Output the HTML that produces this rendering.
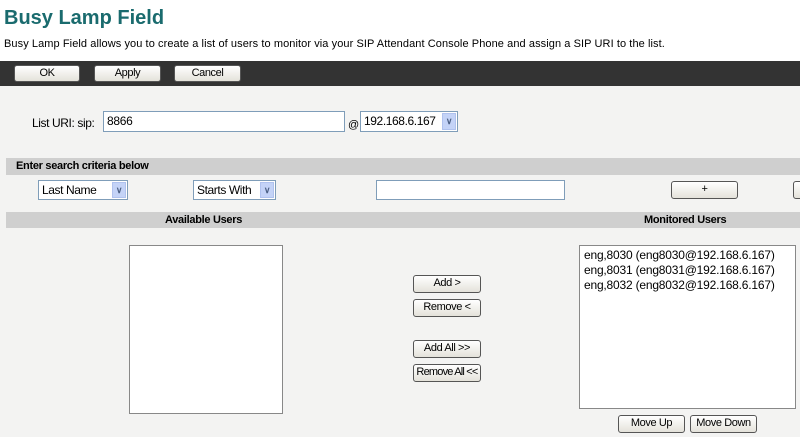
<!DOCTYPE html>
<html><head><style>
body{margin:0;width:800px;height:437px;overflow:hidden;background:#fff;font-family:"Liberation Sans",Arial,sans-serif;font-size:12px;color:#000;position:relative}
.a{position:absolute}
h1{position:absolute;left:4px;top:7px;margin:0;font-size:20px;color:#1a6b6e;font-weight:bold}
.btn{position:absolute;background:linear-gradient(#fff,#e4e2da);border:1px solid #555;border-radius:3px;font-size:11px;text-align:center;box-sizing:border-box;line-height:15px;white-space:nowrap;letter-spacing:-0.4px}
.inp{position:absolute;background:#fff;border:1px solid #7f9db9;box-sizing:border-box;font-size:12px;padding-left:3px;letter-spacing:-0.3px}
.sel{position:absolute;background:#fff;border:1px solid #7f9db9;box-sizing:border-box;font-size:12px;padding-left:3px;line-height:18px;letter-spacing:-0.4px;white-space:nowrap}
.arr{position:absolute;right:1px;top:1px;width:14px;bottom:1px;background:#c4d3f7;border:1px solid #b0c2ee;box-sizing:border-box;color:#4d6185;font-size:9px;text-align:center;line-height:15px;font-weight:bold}
.bar{position:absolute;left:6px;right:0;background:#cfcfcf;font-weight:bold;font-size:11px;letter-spacing:-0.3px}
</style></head><body>
<h1>Busy Lamp Field</h1>
<div class="a" style="left:4px;top:38px;font-size:11px;letter-spacing:0.08px;white-space:nowrap">Busy Lamp Field allows you to create a list of users to monitor via your SIP Attendant Console Phone and assign a SIP URI to the list.</div>
<div class="a" style="left:0;top:61px;width:800px;height:25px;background:#333"></div>
<div class="btn" style="left:14px;top:65px;width:66px;height:17px">OK</div>
<div class="btn" style="left:94px;top:65px;width:67px;height:17px">Apply</div>
<div class="btn" style="left:174px;top:65px;width:67px;height:17px">Cancel</div>
<div class="a" style="left:0;top:86px;width:800px;height:351px;background:#f3f3f2"></div>
<div class="a" style="left:32px;top:116px;letter-spacing:-0.4px">List URI: sip:</div>
<div class="inp" style="left:103px;top:111px;width:242px;height:21px;line-height:19px">8866</div>
<div class="a" style="left:348px;top:119px;font-size:11px">@</div>
<div class="sel" style="left:360px;top:111px;width:98px;height:21px">192.168.6.167<div class="arr">&#8744;</div></div>
<div class="bar" style="top:158px;height:17px;line-height:17px;padding-left:10px">Enter search criteria below</div>
<div class="sel" style="left:38px;top:180px;width:90px;height:20px">Last Name<div class="arr">&#8744;</div></div>
<div class="sel" style="left:193px;top:180px;width:83px;height:20px">Starts With<div class="arr">&#8744;</div></div>
<div class="inp" style="left:376px;top:180px;width:189px;height:20px"></div>
<div class="btn" style="left:671px;top:181px;width:67px;height:18px">+</div>
<div class="btn" style="left:793px;top:181px;width:20px;height:18px"></div>
<div class="bar" style="top:212px;height:16px;line-height:16px"><span class="a" style="left:159px">Available Users</span><span class="a" style="left:638px">Monitored Users</span></div>
<div class="a" style="left:129px;top:245px;width:152px;height:167px;background:#fff;border:1px solid #888"></div>
<div class="btn" style="left:413px;top:275px;width:68px;height:18px">Add &gt;</div>
<div class="btn" style="left:413px;top:299px;width:68px;height:18px">Remove &lt;</div>
<div class="btn" style="left:413px;top:340px;width:68px;height:18px">Add All &gt;&gt;</div>
<div class="btn" style="left:413px;top:364px;width:68px;height:18px;letter-spacing:-0.8px">Remove All &lt;&lt;</div>
<div class="a" style="left:579px;top:245px;width:217px;height:164px;background:#fff;border:1px solid #888;font-size:12px;line-height:15px;padding:2px 4px;box-sizing:border-box;letter-spacing:-0.2px;white-space:nowrap">eng,8030 (eng8030@192.168.6.167)<br>eng,8031 (eng8031@192.168.6.167)<br>eng,8032 (eng8032@192.168.6.167)</div>
<div class="btn" style="left:618px;top:415px;width:67px;height:18px">Move Up</div>
<div class="btn" style="left:690px;top:415px;width:67px;height:18px">Move Down</div>
</body></html>
